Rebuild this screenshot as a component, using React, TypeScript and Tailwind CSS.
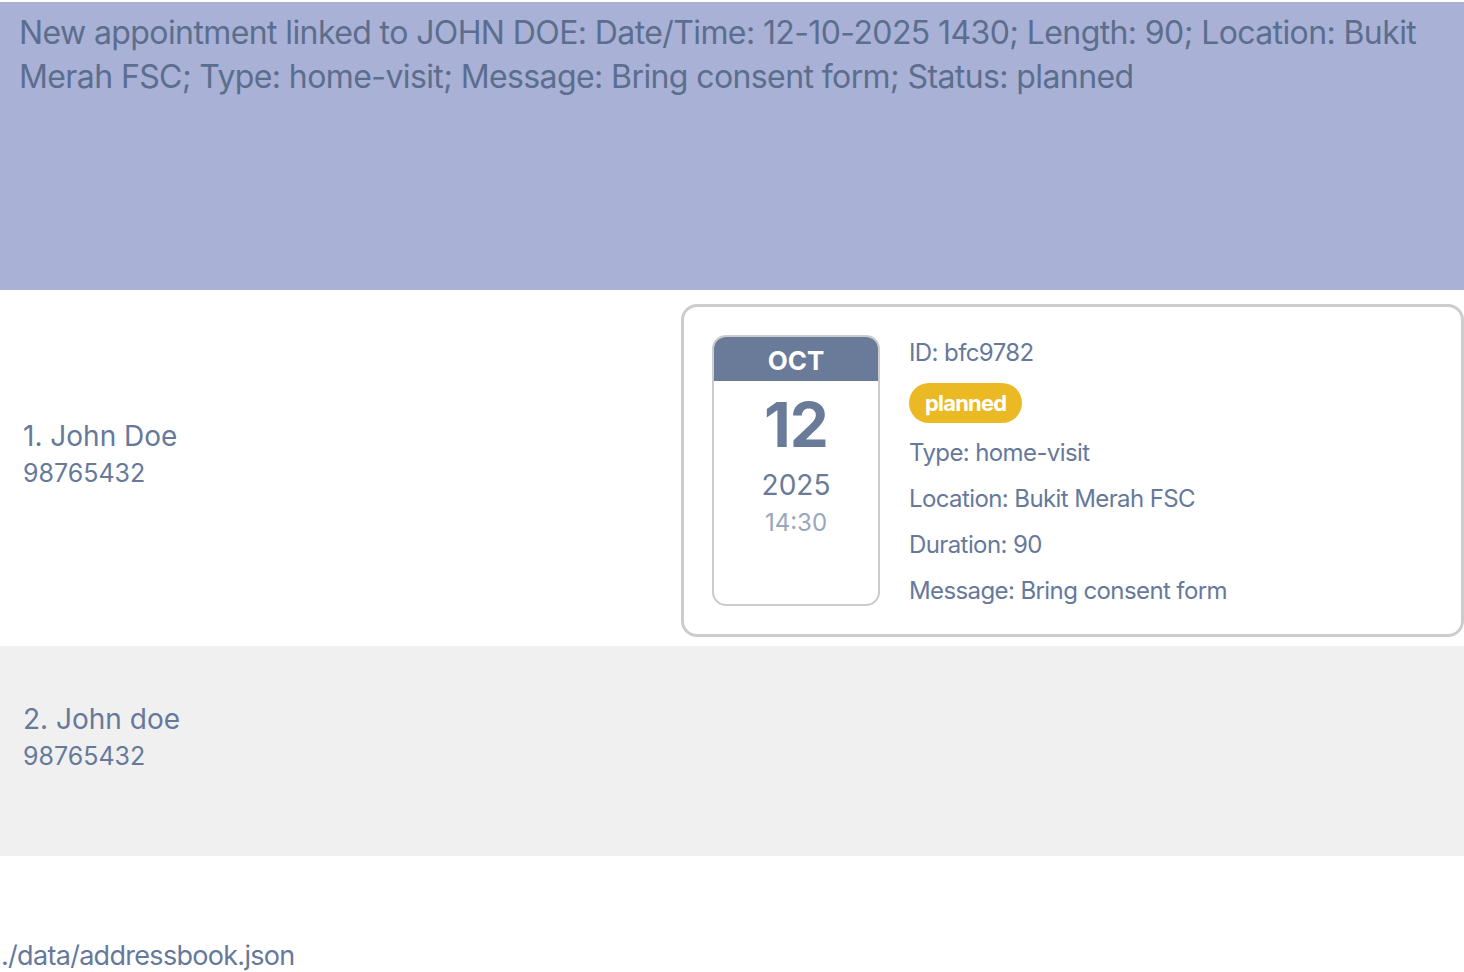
import React from "react";

const font = { fontFamily: "Inter, 'Noto Sans', sans-serif" };

interface Person {
  index: number;
  name: string;
  phone: string;
}

const PersonInfo: React.FC<Person> = ({ index, name, phone }) => (
  <div className="flex flex-col pl-[23px] pb-[29px]">
    <span className="text-[28px] leading-[36px] text-[#66799b]">
      {index}. {name}
    </span>
    <span className="mt-[3px] text-[25px] leading-[32px] text-[#66799b]">{phone}</span>
  </div>
);

const CalendarTile: React.FC = () => (
  <div className="w-[168px] h-[271px] shrink-0 rounded-[14px] border-2 border-[#cccccc] overflow-hidden flex flex-col items-center bg-white">
    <div className="w-full h-[44px] bg-[#6a7b99] flex items-center justify-center pt-[3px]">
      <span className="text-[26px] font-bold text-white leading-none">OCT</span>
    </div>
    <span className="mt-[8px] text-[62px] font-bold leading-[72px] tracking-[-1px] text-[#6a7b99]">12</span>
    <span className="mt-[7px] text-[28px] leading-[34px] text-[#6a7b99]">2025</span>
    <span className="mt-[5px] text-[24px] leading-[32px] text-[#9aa6bd]">14:30</span>
  </div>
);

const AppointmentCard: React.FC = () => (
  <div className="mt-[14px] mb-[9px] w-[783px] h-[333px] rounded-[16px] border-[3px] border-[#cccccc] bg-white flex pl-[28px] pt-[28px] gap-[29px]">
    <CalendarTile />
    <div className="flex flex-col text-[#66799b] text-[24px] tracking-[-0.6px] pt-[2px]">
      <span className="leading-[32px]">ID: bfc9782</span>
      <span className="mt-[14px] self-start h-[40px] px-[16px] rounded-full bg-[#ebb923] text-white font-bold text-[22px] tracking-[-0.8px] flex items-center">
        planned
      </span>
      <span className="mt-[14px] leading-[32px]">Type: home-visit</span>
      <span className="mt-[14px] leading-[32px]">Location: Bukit Merah FSC</span>
      <span className="mt-[14px] leading-[32px]">Duration: 90</span>
      <span className="mt-[14px] leading-[32px]">Message: Bring consent form</span>
    </div>
  </div>
);

export default function App() {
  return (
    <div className="w-[1464px] h-[972px] bg-white overflow-hidden flex flex-col" style={font}>
      <div className="mt-[2px] h-[288px] bg-[#a9b1d6] px-[19px] pt-[9px]">
        <p className="text-[32px] leading-[44px] text-[#5c6e8e] tracking-[-0.6px]">
          New appointment linked to JOHN DOE: Date/Time: 12-10-2025 1430; Length: 90; Location: Bukit Merah FSC; Type: home-visit; Message: Bring consent form; Status: planned
        </p>
      </div>
      <div className="flex items-stretch bg-white">
        <div className="w-[681px] flex items-center">
          <PersonInfo index={1} name="John Doe" phone="98765432" />
        </div>
        <AppointmentCard />
      </div>
      <div className="h-[210px] bg-[#f0f0f0] flex items-center">
        <PersonInfo index={2} name="John doe" phone="98765432" />
      </div>
      <div className="flex-1 flex items-end">
        <span className="pl-[1px] -mb-[2px] text-[27px] leading-[36px] text-[#66799b] tracking-[-0.7px]">
          ./data/addressbook.json
        </span>
      </div>
    </div>
  );
}
